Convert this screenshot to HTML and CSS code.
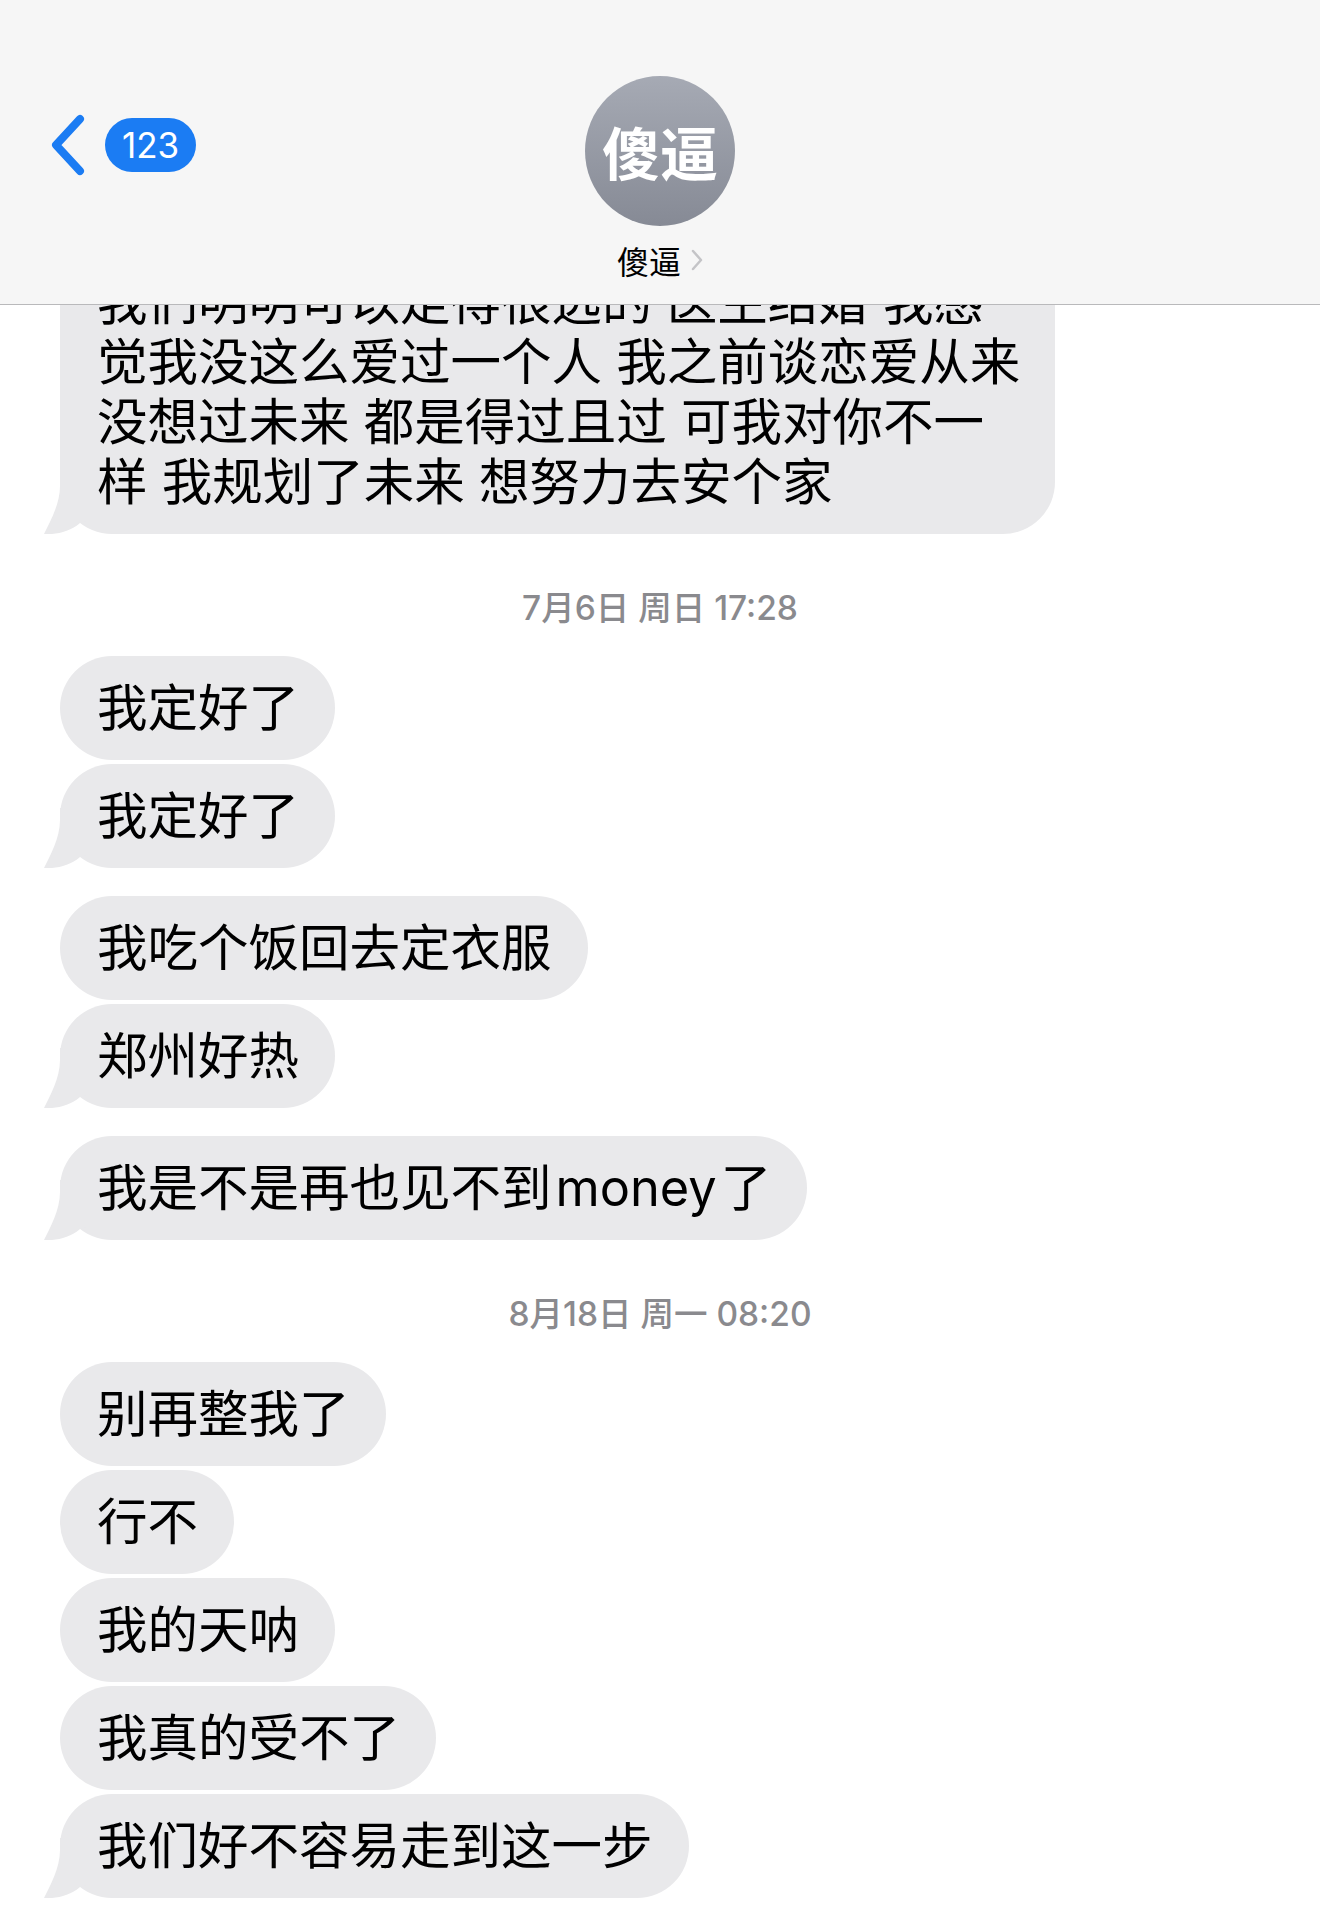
FILE: index.html
```html
<!DOCTYPE html>
<html lang="zh-CN">
<head>
<meta charset="utf-8">
<title>傻逼</title>
<link rel="stylesheet" href="styles.css">
</head>
<body>
<div class="screen">
  <header class="nav">
    <div class="nav-left">
      <svg class="back" viewBox="0 0 36 62"><path d="M30 5 L6 31 L30 57"/></svg>
      <span class="badge">123</span>
    </div>
    <div class="contact">
      <div class="avatar">傻逼</div>
      <div class="name"><span>傻逼</span><svg class="name-chev" viewBox="0 0 12 22"><path d="M2 2 L10 11 L2 20"/></svg></div>
    </div>
    <div class="nav-right"></div>
  </header>
  <main class="thread">
    <div class="messages">
      <div class="group">
        <div class="bubble wide">我们明明可以走得很远的 医生结婚 我感<br>觉我没这么爱过一个人 我之前谈恋爱从来<br>没想过未来 都是得过且过 可我对你不一<br>样 我规划了未来 想努力去安个家<svg class="tail" viewBox="-16 -60 60 60"><path d="M0 -60 L0 -48 C0 -30 -10 -12 -16 0 C-6 1 10 -2 20 -11 L30 -14 L30 -60 Z"/></svg></div>
      </div>
      <div class="stamp">7月6日 周日 17:28</div>
      <div class="group">
        <div class="bubble">我定好了</div>
        <div class="bubble">我定好了<svg class="tail" viewBox="-16 -60 60 60"><path d="M0 -60 L0 -48 C0 -30 -10 -12 -16 0 C-6 1 10 -2 20 -11 L30 -14 L30 -60 Z"/></svg></div>
      </div>
      <div class="group">
        <div class="bubble">我吃个饭回去定衣服</div>
        <div class="bubble">郑州好热<svg class="tail" viewBox="-16 -60 60 60"><path d="M0 -60 L0 -48 C0 -30 -10 -12 -16 0 C-6 1 10 -2 20 -11 L30 -14 L30 -60 Z"/></svg></div>
      </div>
      <div class="group">
        <div class="bubble">我是不是再也见不到<span class="latin">money</span>了<svg class="tail" viewBox="-16 -60 60 60"><path d="M0 -60 L0 -48 C0 -30 -10 -12 -16 0 C-6 1 10 -2 20 -11 L30 -14 L30 -60 Z"/></svg></div>
      </div>
      <div class="stamp">8月18日 周一 08:20</div>
      <div class="group">
        <div class="bubble">别再整我了</div>
        <div class="bubble">行不</div>
        <div class="bubble">我的天呐</div>
        <div class="bubble">我真的受不了</div>
        <div class="bubble">我们好不容易走到这一步<svg class="tail" viewBox="-16 -60 60 60"><path d="M0 -60 L0 -48 C0 -30 -10 -12 -16 0 C-6 1 10 -2 20 -11 L30 -14 L30 -60 Z"/></svg></div>
      </div>
    </div>
  </main>
</div>
</body>
</html>
```

FILE: styles.css
```css
* { box-sizing: border-box; margin: 0; padding: 0; }
html, body { background: #fff; }
body {
  width: 1320px;
  height: 1930px;
  overflow: hidden;
  font-family: Inter, "Noto Sans CJK SC", sans-serif;
  color: #000;
}
.screen { display: flex; flex-direction: column; height: 1930px; }

.nav {
  flex: none;
  height: 305px;
  background: #f6f6f6;
  border-bottom: 1px solid #b9b9bb;
  display: grid;
  grid-template-columns: 1fr auto 1fr;
}
.nav-left {
  display: flex;
  align-items: center;
  gap: 19px;
  height: 62px;
  margin-top: 114px;
  padding-left: 50px;
}
.back {
  width: 36px;
  height: 62px;
  fill: none;
  stroke: #1b7cf3;
  stroke-width: 8;
  stroke-linecap: round;
  stroke-linejoin: round;
}
.badge {
  height: 54px;
  min-width: 91px;
  padding: 0 16px;
  border-radius: 27px;
  background: #1b7cf3;
  color: #fff;
  font-size: 35px;
  line-height: 54px;
  text-align: center;
}
.contact {
  display: flex;
  flex-direction: column;
  align-items: center;
  padding-top: 76px;
}
.avatar {
  width: 150px;
  height: 150px;
  border-radius: 50%;
  background: linear-gradient(#a6aab4, #868a95);
  color: #fff;
  font-family: "Noto Sans CJK SC", sans-serif;
  font-weight: 700;
  font-size: 58px;
  line-height: 1;
  display: flex;
  align-items: center;
  justify-content: center;
}
.name {
  margin-top: 14px;
  display: flex;
  align-items: center;
  gap: 10px;
  font-family: "Noto Sans CJK SC", sans-serif;
  font-size: 32px;
  line-height: 40px;
}
.name-chev {
  width: 12px;
  height: 22px;
  fill: none;
  stroke: #c4c4c7;
  stroke-width: 2.5;
  stroke-linecap: round;
  stroke-linejoin: round;
}

.thread { flex: 1; overflow: hidden; }
.messages {
  margin-top: -55px;
  display: flex;
  flex-direction: column;
  gap: 28px;
}
.group {
  display: flex;
  flex-direction: column;
  align-items: flex-start;
  gap: 4px;
  padding-left: 60px;
}
.stamp {
  margin-top: 26px;
  text-align: center;
  font-size: 33.5px;
  line-height: 40px;
  font-weight: 500;
  color: #8a8a8e;
}
.bubble {
  position: relative;
  z-index: 0;
  background: #e9e9eb;
  border-radius: 52px;
  padding: 22px 36px 22px 37px;
  font-size: 50.5px;
  line-height: 60px;
  white-space: nowrap;
}
.bubble.wide { width: 995px; }
.latin { margin: 0 4px 0 4px; }
.tail {
  position: absolute;
  z-index: -1;
  left: -16px;
  bottom: 0;
  width: 60px;
  height: 60px;
  fill: #e9e9eb;
}
```
